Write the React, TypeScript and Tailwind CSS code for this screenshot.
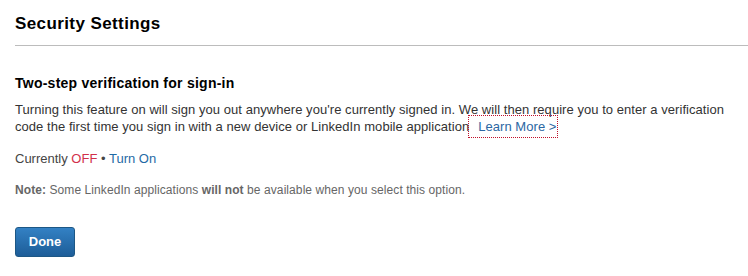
import * as React from "react";

const App: React.FC = () => {
    return (
        <div
            className="w-[748px] h-[276px] bg-white overflow-hidden text-[#333]"
            style={{ fontFamily: '"Liberation Sans", Arial, sans-serif' }}
        >
            {/* header */}
            <div className="ml-[15px] pt-[14px] pb-[11px] border-b border-[#bcbcbc]">
                <h1 className="text-[17px] leading-[20px] font-bold tracking-[0.4px] text-black">
                    Security Settings
                </h1>
            </div>

            <div className="px-[15px] pt-[29px]">
                <h2 className="text-[14px] leading-[17px] font-bold tracking-[0.25px] text-black">
                    Two-step verification for sign-in
                </h2>
                <p className="mt-[9px] whitespace-nowrap text-[13px] leading-[17px] tracking-[0.05px] text-[#333]">
                    Turning this feature on will sign you out anywhere you're
                    currently signed in. We will then require you to enter a
                    verification
                    <br />
                    code the first time you sign in with a new device or LinkedIn
                    mobile application
                    <a
                        href="#"
                        className="inline-block pl-[9px] pr-[1px] py-[2px] -my-[2px] leading-[17px] text-[#2b67a3] outline-1 outline-dotted outline-[#c0102a]"
                    >
                        Learn More &gt;
                    </a>
                </p>

                <div className="mt-[15px] text-[13px] leading-[17px] text-[#444]">
                    Currently <span className="text-[#d2304a]">OFF</span>{" "}
                    &bull;{" "}
                    <a href="#" className="text-[#1f6aa5]">
                        Turn On
                    </a>
                </div>

                <p className="mt-[15px] text-[12px] leading-[16px] tracking-[0.08px] text-[#666]">
                    <span className="font-bold">Note:</span> Some LinkedIn
                    applications <span className="font-bold">will not</span> be
                    available when you select this option.
                </p>

                <button className="mt-[29px] w-[60px] h-[30px] rounded-[3px] border border-[#1d5785] bg-gradient-to-b from-[#3381c4] to-[#1d5d98] text-white text-[13px] font-bold">
                    Done
                </button>
            </div>
        </div>
    );
};

export default App;
